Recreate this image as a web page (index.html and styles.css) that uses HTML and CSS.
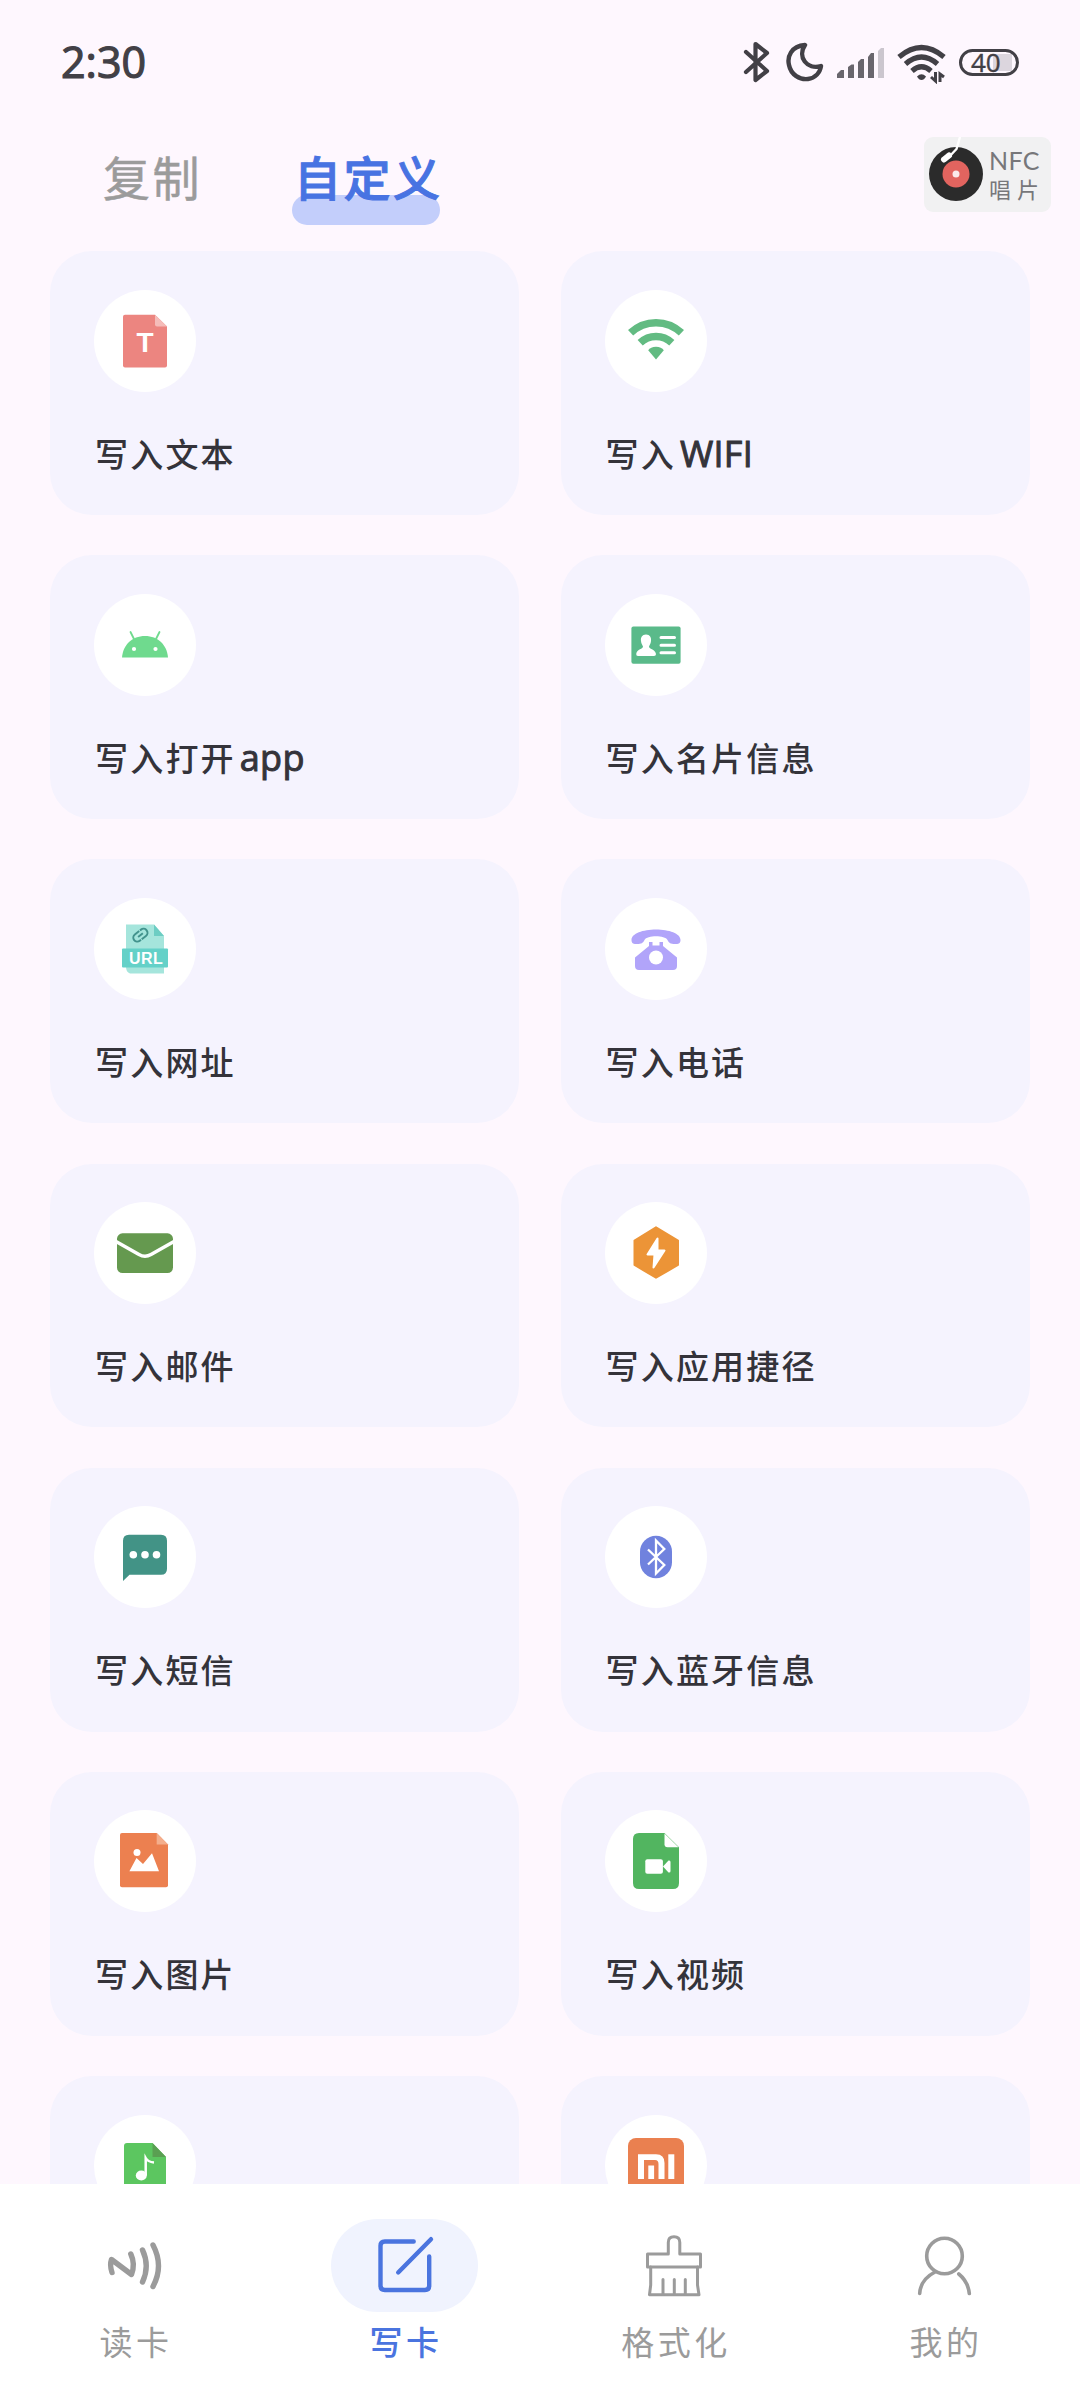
FILE: index.html
```html
<!DOCTYPE html>
<html lang="zh-CN">
<head>
    <meta charset="UTF-8">
    <meta name="viewport" content="width=device-width, initial-scale=1.0">
    <title>写卡</title>
    <link rel="stylesheet" href="styles.css">
</head>
<body>

    <div class="status-bar">
        <span class="time">2:30</span>
        <div class="status-icons">
            <svg class="st-bt" width="28" height="42" viewBox="0 0 28 42" fill="none" stroke="#424046" stroke-width="4.2" stroke-linejoin="round" stroke-linecap="round"><path d="M3 11 L24 30 L12.5 39 V3 L24 12 L3 31"/></svg>
            <svg class="st-moon" width="38" height="40" viewBox="0 0 38 40" fill="none" stroke="#424046" stroke-width="4.4" stroke-linejoin="round"><path d="M19 3 C5 4 1 15 3 23 C5 33 14 38 22 37 C29 36 34 31 35 24 C21 28 11 15 19 3 Z"/></svg>
            <svg class="st-signal" width="48" height="32" viewBox="0 0 48 32" fill="#69666d"><path d="M0 27 L4 23 H7 V31 H0 Z"/><path d="M11 20 L14.500 17.500 H17 V31 H11 Z"/><path d="M21 15 L24 12 H27 V31 H21 Z"/><path d="M31 10 L34 6 H37 V31 H31 Z"/><path fill="#cbc6ce" d="M41 4 L44 1 H47 V31 H41 Z"/></svg>
            <svg class="st-wifi" width="50" height="40" viewBox="0 0 50 40" fill="none" stroke="#424046" stroke-width="5.2"><path d="M2 13 Q24.500 -6 47 13"/><path d="M8.500 20 Q24.500 6 40.500 20"/><path d="M15 27 Q24.500 18.500 34 27"/><path fill="#424046" stroke="none" d="M20 32.500 Q24.500 28 29 32.500 Q27 36 24.500 36 Q22 36 20 32.500 Z"/><path stroke-width="3" d="M38.500 28 V37 L34 33 M43 38 V30 L47 33"/></svg>
            <span class="battery">40</span>
        </div>
    </div>

    <div class="tabs">
        <span class="tab">复制</span>
        <span class="tab active">自定义</span>
        <div class="record">
            <svg width="56" height="75" viewBox="0 0 56 75">
                <circle cx="28" cy="37" r="27" fill="#2b2b2b"/>
                <circle cx="28" cy="37" r="13.500" fill="#e2645f"/>
                <circle cx="28" cy="37" r="3.500" fill="#fbe9ea"/>
                <path d="M32 0 L28.500 12 L20 21" fill="none" stroke="#fff" stroke-width="2.400"/>
                <path d="M21 18.500 L16 22.500" stroke="#fff" stroke-width="6" stroke-linecap="round"/>
            </svg>
            <div class="record-text"><span class="nfc">NFC</span><span class="disc">唱片</span></div>
        </div>
    </div>

    <div class="grid">
        <div class="card">
            <div class="icon"><svg viewBox="0 0 60 60"><path fill="#ec8580" d="M10 3.700 H40 L52 15.400 V54.400 Q52 56.400 50 56.400 H10 Q8 56.400 8 54.400 V5.700 Q8 3.700 10 3.700 Z"/><path fill="#f5bcb9" d="M40 3.700 L52 15.400 H42 Q40 15.400 40 13.400 Z"/><text x="30" y="40.700" text-anchor="middle" class="t-letter">T</text></svg></div>
            <div class="label">写入文本</div>
        </div>
        <div class="card">
            <div class="icon"><svg viewBox="0 0 60 60" fill="none" stroke="#62bb82" stroke-width="7.500"><path d="M4.600 21.800 A36.800 36.800 0 0 1 55.400 21.800"/><path d="M14.200 31.800 A23 23 0 0 1 45.800 31.800"/><path fill="#62bb82" stroke="none" d="M30 48.500 L22.200 39.300 Q24.500 35.800 30 35.800 Q35.500 35.800 37.800 39.300 Z"/></svg></div>
            <div class="label">写入<span class="latin">WIFI</span></div>
        </div>

        <div class="card">
            <div class="icon"><svg viewBox="0 0 60 60"><path fill="#6fda8e" d="M7 42.500 C8 30 17 21 30 21 C43 21 52 30 53 42.500 Z"/><path d="M15.500 17 L19.500 25 M44.500 17 L40.500 25" stroke="#6fda8e" stroke-width="1.800" stroke-linecap="round"/><circle cx="19" cy="34" r="2.100" fill="#fff"/><circle cx="40.500" cy="34" r="2.100" fill="#fff"/></svg></div>
            <div class="label">写入打开<span class="latin">app</span></div>
        </div>
        <div class="card">
            <div class="icon"><svg viewBox="0 0 60 60"><rect x="5.400" y="11.500" width="49.200" height="37.300" rx="2" fill="#5aba8a"/><path fill="#fff" d="M20 19.500 C24 19.500 25.500 22.500 25 26 C24.700 29 23.500 30 23 31.500 C22.700 34 29 34 30 39 Q30 41 28 41 H12 Q10 41 10.200 39 C11 34 17.300 34 17 31.500 C16.500 30 15.300 29 15 26 C14.500 22.500 16 19.500 20 19.500 Z"/><path d="M35 22.500 H48.500 M35 30.200 H48.500 M35 37.800 H48.500" stroke="#fff" stroke-width="3" stroke-linecap="round"/></svg></div>
            <div class="label">写入名片信息</div>
        </div>

        <div class="card">
            <div class="icon"><svg viewBox="0 0 60 60"><path fill="#a5e5dc" d="M11 5.500 H39 L49 17 V54.500 H15 Q11 53 11 48 Z"/><path fill="#6ccdc3" d="M39 5.500 L49 17 H39 Z"/><rect x="7" y="29.500" width="46" height="19" rx="1" fill="#64d1c8"/><g transform="rotate(-38 25.400 16.200)" fill="none" stroke="#42938d" stroke-width="2"><path d="M23 20.200 H21.500 A4 4 0 0 1 21.500 12.200 H27 M28 12.200 H29.300 A4 4 0 0 1 29.300 20.200 H24 M22.500 16.200 H28.500"/></g><text x="31.200" y="44.500" text-anchor="middle" class="url-letters">URL</text></svg></div>
            <div class="label">写入网址</div>
        </div>
        <div class="card">
            <div class="icon"><svg viewBox="0 0 60 60" fill="#b1a4fa"><path d="M30 10.500 C43 10.500 54.500 14.500 54.500 21 C54.500 25 52 25 49 25 C44.500 25 43 24 41.500 21 C39 16 21 16 18.500 21 C17 24 15.500 25 11 25 C8 25 5.500 25 5.500 21 C5.500 14.500 17 10.500 30 10.500 Z"/><path d="M23 23 H26.500 V26.500 H33.500 V23 H37 V27 L51 38.500 V47 Q51 51 47 51 H13 Q9 51 9 47 V38.500 L23 27 Z"/><circle cx="30" cy="38.500" r="7" fill="#fff"/></svg></div>
            <div class="label">写入电话</div>
        </div>

        <div class="card">
            <div class="icon"><svg viewBox="0 0 60 60"><rect x="2" y="10.300" width="56" height="39.800" rx="5.500" fill="#65994f"/><path d="M1 18.500 L24 31.500 Q30 35 36 31.500 L59 18.500" fill="none" stroke="#fff" stroke-width="3.500"/></svg></div>
            <div class="label">写入邮件</div>
        </div>
        <div class="card">
            <div class="icon"><svg viewBox="0 0 60 60"><path fill="#ec9437" stroke="#ec9437" stroke-width="2" stroke-linejoin="round" d="M30 4.300 L52 17.500 V42 L30 54.700 L8.500 42 V17.500 Z"/><path fill="#fff" stroke="#fff" stroke-width="2" stroke-linejoin="round" d="M31.500 15.500 L21.500 31.500 H28.500 L27.500 44.500 L38.500 27.500 H31.500 Z"/></svg></div>
            <div class="label">写入应用捷径</div>
        </div>

        <div class="card">
            <div class="icon"><svg viewBox="0 0 60 60"><path fill="#429386" d="M14 7.700 H46 Q52 7.700 52 13.700 V41.700 Q52 47.700 46 47.700 H14.500 L8 54 V13.700 Q8 7.700 14 7.700 Z"/><g fill="#fff"><circle cx="18.300" cy="27.700" r="3.800"/><circle cx="30" cy="27.700" r="3.800"/><circle cx="41.500" cy="27.700" r="3.800"/></g></svg></div>
            <div class="label">写入短信</div>
        </div>
        <div class="card">
            <div class="icon"><svg viewBox="0 0 60 60"><rect x="14" y="8.700" width="32" height="42.600" rx="16" fill="#7082de"/><path d="M22 22.500 L38.300 38 L30 46.500 V13.500 L38.300 22 L22 37.500" fill="none" stroke="#fff" stroke-width="2.300"/></svg></div>
            <div class="label">写入蓝牙信息</div>
        </div>

        <div class="card">
            <div class="icon"><svg viewBox="0 0 60 60"><path fill="#ec8050" d="M7 2 H41.700 L53 13.500 V54.300 Q53 56.300 51 56.300 H7 Q5 56.300 5 54.300 V4 Q5 2 7 2 Z"/><path fill="#f4ae8c" d="M41.700 2 L53 13.500 H41.700 Z"/><g fill="#fff"><circle cx="22" cy="21.500" r="3.500"/><path d="M14.400 40.300 L21.500 27 L28 33 L37 22.300 L44 40.300 Z"/></g></svg></div>
            <div class="label">写入图片</div>
        </div>
        <div class="card">
            <div class="icon"><svg viewBox="0 0 60 60"><path fill="#52b560" d="M13 2 H38.500 L53 16.300 V52 Q53 58 47 58 H13 Q7 58 7 52 V8 Q7 2 13 2 Z"/><path fill="#fff" d="M38.500 2.500 L52.500 16.300 H41.500 Q38.500 16.300 38.500 13.300 Z"/><g fill="#fff"><rect x="19.300" y="28.300" width="17.600" height="14.400" rx="2"/><path d="M37 35.500 L42.500 29.500 Q44.500 29 44.500 31 V40 Q44.500 42 42.500 41.500 Z"/></g></svg></div>
            <div class="label">写入视频</div>
        </div>

        <div class="card">
            <div class="icon"><svg viewBox="0 0 60 60"><path fill="#5cc660" d="M12 7 H37.500 L51 21 V56 H9 V10 Q9 7 12 7 Z"/><path fill="#5a9f52" d="M37.500 7 L51 21 H37.500 Z"/><ellipse cx="26.300" cy="39.500" rx="5.500" ry="5" fill="#fff"/><path d="M30.700 39.500 V22 Q33 26 39 26.500" fill="none" stroke="#fff" stroke-width="2.500"/></svg></div>
        </div>
        <div class="card">
            <div class="icon"><svg viewBox="0 0 60 60"><rect x="2" y="2" width="56" height="56" rx="8" fill="#ea8050"/><g fill="#fff"><path d="M12 18.300 H30 Q38.500 18.300 38.500 27 V43 H32.500 V28 Q32.500 24 29 24 H18 V43 H12 Z"/><rect x="22.300" y="29.500" width="5.800" height="13.500"/><rect x="42.300" y="18.300" width="6" height="24.700"/></g></svg></div>
        </div>
    </div>

    <div class="nav">
        <div class="nav-item">
            <div class="nav-icon"><svg viewBox="0 0 66 66" fill="none" stroke="#9b9b9b" stroke-width="5.400" stroke-linecap="round" stroke-linejoin="round"><path d="M10 39.500 Q7.500 32 9.500 26.500 L29.500 41.500 Q33.500 31 28.800 21"/><path d="M40.500 17 Q48 33 40.500 49"/><path d="M51 12 Q62 33 51 53.500"/></svg></div>
            <span>读卡</span>
        </div>
        <div class="nav-item active">
            <div class="nav-icon"><svg viewBox="0 0 66 66" fill="none" stroke="#4a74df" stroke-width="4.400" stroke-linecap="round"><path d="M41.700 8.500 H12.800 Q8.500 8.500 8.500 12.800 V52.700 Q8.500 57 12.800 57 H53 Q57.200 57 57.200 52.700 V23.500"/><path d="M26.200 39.500 L59 6.200"/></svg></div>
            <span>写卡</span>
        </div>
        <div class="nav-item">
            <div class="nav-icon"><svg viewBox="0 0 66 66" fill="none" stroke="#9b9b9b" stroke-width="3" stroke-linecap="round" stroke-linejoin="round"><path d="M26.300 21 V9.500 Q26.300 3.800 32 3.800 Q37.800 3.800 37.800 9.500 V21 H58.500 V34 H5.500 V21 Z"/><path d="M8.700 34 V52 L7.500 61.700 H57 L55.500 52 V34"/><path d="M21 46.500 V61 M32.300 46.500 V61 M43.300 46.500 V61"/></svg></div>
            <span>格式化</span>
        </div>
        <div class="nav-item">
            <div class="nav-icon"><svg viewBox="0 0 66 66" fill="none" stroke="#9b9b9b" stroke-width="3.600" stroke-linecap="round"><circle cx="32.500" cy="23" r="17.800"/><path d="M23 39 Q8.500 46.500 7.700 60.500"/><path d="M46.800 41 Q56 48.500 57.300 60.500"/></svg></div>
            <span>我的</span>
        </div>
    </div>

</body>
</html>
```
FILE: styles.css
```css
* {
    box-sizing: border-box;
}
body {
    display: flex;
    flex-direction: column;
    height: 2403px;
    margin: 0;
    overflow: hidden;
    background-color: #fef7fe;
    font-family: "Noto Sans CJK SC", sans-serif;
    color: #34333a;
}
svg {
    display: block;
}

/* status bar */
.status-bar {
    display: flex;
    align-items: center;
    justify-content: space-between;
    flex: none;
    height: 124px;
    padding: 0 61px 0 61px;
}
.time {
    margin-top: -2px;
    font-family: "Open Sans", sans-serif;
    font-size: 43px;
    font-weight: 500;
    color: #424046;
    -webkit-text-stroke: 1.200px #424046;
}
.status-icons {
    display: flex;
    align-items: center;
}
.st-moon {
    margin-left: 15px;
}
.st-signal {
    margin: 2px 0 0 13px;
}
.st-wifi {
    margin: 3px 0 0 12px;
}
.battery {
    width: 60px;
    height: 27px;
    margin-left: 12px;
    padding-left: 9px;
    border: 3px solid #424046;
    border-radius: 14px;
    background: linear-gradient(#dcd6de, #dcd6de) 31px center / 19px 17px no-repeat;
    font-family: "Open Sans", sans-serif;
    font-size: 26px;
    line-height: 20px;
    color: #424046;
    -webkit-text-stroke: 0.400px #424046;
}

/* top tabs */
.tabs {
    display: flex;
    flex: none;
    height: 127px;
    padding: 13px 29px 0 103px;
}
.tab {
    height: 88px;
    font-size: 47px;
    line-height: 77px;
    letter-spacing: 2.500px;
    color: #9b9b9b;
    -webkit-text-stroke: 0.500px #9b9b9b;
}
.tab.active {
    position: relative;
    z-index: 0;
    width: 148px;
    margin-left: 90px;
    padding-left: 2px;
    font-weight: 500;
    white-space: nowrap;
    color: #4873e2;
    -webkit-text-stroke: 1px #4873e2;
}
.tab.active::before {
    content: "";
    position: absolute;
    left: 0;
    top: 58px;
    width: 148px;
    height: 30px;
    border-radius: 15px;
    background-color: #c3cefb;
    z-index: -1;
}
.record {
    display: flex;
    width: 127px;
    height: 75px;
    margin-left: auto;
    padding-left: 4px;
    border-radius: 9px;
    background-color: #f1f1f2;
    color: #77777a;
}
.record-text {
    display: flex;
    flex-direction: column;
    padding: 9px 0 0 5px;
}
.nfc {
    font-family: Lato, sans-serif;
    font-size: 25px;
    line-height: 28px;
    letter-spacing: 0.300px;
}
.disc {
    font-size: 22px;
    line-height: 28px;
    letter-spacing: 6px;
}

/* cards */
.grid {
    display: grid;
    grid-template-columns: 469px 469px;
    grid-auto-rows: 263.800px;
    gap: 40.400px 41.500px;
    flex: 1;
    min-height: 0;
    padding: 0 50px;
    overflow: hidden;
}
.card {
    padding: 38.500px 44px 0;
    border-radius: 42px;
    background-color: #f5f3fe;
}
.icon {
    display: flex;
    align-items: center;
    justify-content: center;
    width: 102px;
    height: 102px;
    border-radius: 50%;
    background-color: #fff;
}
.icon svg {
    width: 60px;
    height: 60px;
}
.t-letter {
    font: bold 28px "Liberation Sans", sans-serif;
    fill: #fff;
}
.url-letters {
    font: bold 16px "Liberation Sans", sans-serif;
    letter-spacing: 0.500px;
    fill: #fff;
}
.label {
    height: 50px;
    margin-top: 36px;
    padding-left: 1px;
    font-size: 33px;
    font-weight: 500;
    line-height: 50px;
    letter-spacing: 2.200px;
    white-space: nowrap;
}
.latin {
    margin-left: 4px;
    font-family: "Open Sans", sans-serif;
    font-size: 36px;
    letter-spacing: 0.300px;
    -webkit-text-stroke: 1px #34333a;
}

/* bottom navigation */
.nav {
    display: flex;
    flex: none;
    height: 219.500px;
    padding-top: 35.500px;
    background-color: #fff;
}
.nav-item {
    display: flex;
    flex-direction: column;
    align-items: center;
    width: 270px;
    font-size: 33px;
    line-height: 50px;
    letter-spacing: 3.500px;
    color: #9b9b9b;
}
.nav-item span {
    margin: 4px -2px 0 0;
}
.nav-icon {
    display: flex;
    align-items: center;
    justify-content: center;
    width: 147px;
    height: 93px;
    margin-right: 1px;
    border-radius: 47px;
}
.nav-icon svg {
    width: 66px;
    height: 66px;
}
.nav-item.active {
    font-weight: 500;
    color: #4a74df;
}
.nav-item.active .nav-icon {
    background-color: #f0f3fe;
}
```
